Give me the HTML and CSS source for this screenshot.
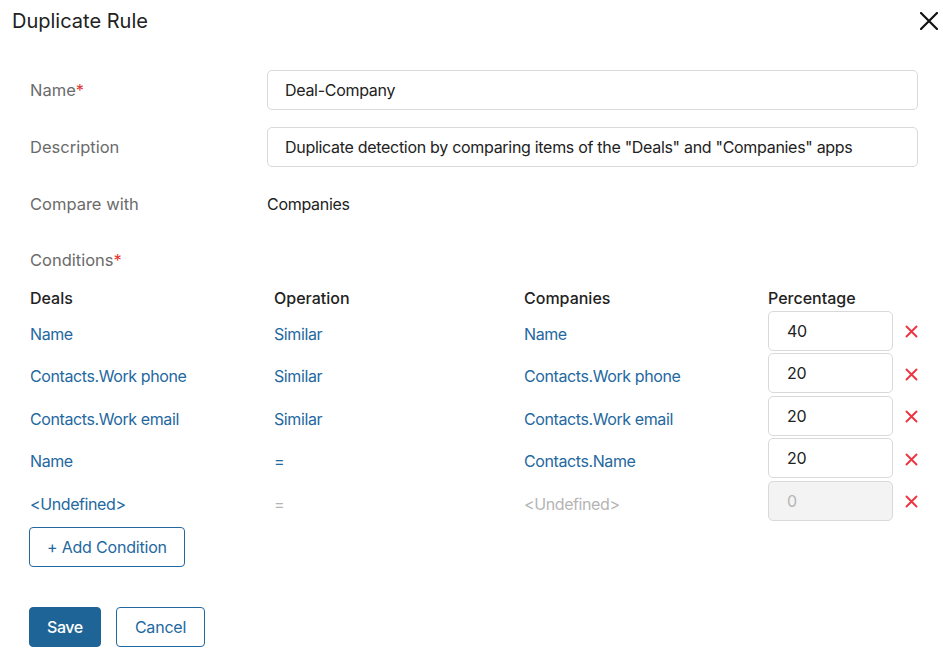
FILE: index.html
```html
<!DOCTYPE html>
<html>
<head>
<meta charset="utf-8">
<link rel="stylesheet" href="styles.css">
</head>
<body>
<div class="dialog">
  <div class="header">
    <h1 class="title">Duplicate Rule</h1>
    <button class="close" aria-label="Close">
      <svg width="18" height="18" viewBox="0 0 18 18"><path d="M1 1 L17 17 M17 1 L1 17" stroke="#111" stroke-width="2.2" stroke-linecap="round"/></svg>
    </button>
  </div>
  <div class="form">
    <div class="label">Name<span class="req">*</span></div>
    <div class="field"><div class="input">Deal-Company</div></div>
    <div class="label">Description</div>
    <div class="field"><div class="input">Duplicate detection by comparing items of the "Deals" and "Companies" apps</div></div>
    <div class="label">Compare with</div>
    <div class="field"><div class="value">Companies</div></div>
  </div>
  <div class="cond-label">Conditions<span class="req">*</span></div>
  <div class="table">
    <div class="th">Deals</div><div class="th">Operation</div><div class="th">Companies</div><div class="th">Percentage</div><div></div>

    <div class="td link">Name</div><div class="td link">Similar</div><div class="td link">Name</div><div class="pct"><div class="num">40</div></div><div class="del"><svg width="13" height="13" viewBox="0 0 13 13"><path d="M1.5 1.5 L11.5 11.5 M11.5 1.5 L1.5 11.5" stroke="#ef3340" stroke-width="1.9" stroke-linecap="round"/></svg></div>

    <div class="td link">Contacts.Work phone</div><div class="td link">Similar</div><div class="td link">Contacts.Work phone</div><div class="pct"><div class="num">20</div></div><div class="del"><svg width="13" height="13" viewBox="0 0 13 13"><path d="M1.5 1.5 L11.5 11.5 M11.5 1.5 L1.5 11.5" stroke="#ef3340" stroke-width="1.9" stroke-linecap="round"/></svg></div>

    <div class="td link">Contacts.Work email</div><div class="td link">Similar</div><div class="td link">Contacts.Work email</div><div class="pct"><div class="num">20</div></div><div class="del"><svg width="13" height="13" viewBox="0 0 13 13"><path d="M1.5 1.5 L11.5 11.5 M11.5 1.5 L1.5 11.5" stroke="#ef3340" stroke-width="1.9" stroke-linecap="round"/></svg></div>

    <div class="td link">Name</div><div class="td link">=</div><div class="td link">Contacts.Name</div><div class="pct"><div class="num">20</div></div><div class="del"><svg width="13" height="13" viewBox="0 0 13 13"><path d="M1.5 1.5 L11.5 11.5 M11.5 1.5 L1.5 11.5" stroke="#ef3340" stroke-width="1.9" stroke-linecap="round"/></svg></div>

    <div class="td link">&lt;Undefined&gt;</div><div class="td muted">=</div><div class="td muted">&lt;Undefined&gt;</div><div class="pct"><div class="num disabled">0</div></div><div class="del"><svg width="13" height="13" viewBox="0 0 13 13"><path d="M1.5 1.5 L11.5 11.5 M11.5 1.5 L1.5 11.5" stroke="#ef3340" stroke-width="1.9" stroke-linecap="round"/></svg></div>
  </div>
  <button class="btn-outline add">+ Add Condition</button>
  <div class="actions">
    <button class="btn-primary">Save</button>
    <button class="btn-outline">Cancel</button>
  </div>
</div>
</body>
</html>
```
FILE: styles.css
```css
* { box-sizing: border-box; }
html, body { margin: 0; padding: 0; background: #fff; }
body {
  font-family: Inter, "Noto Sans", "Liberation Sans", sans-serif;
  font-size: 16px;
  color: #222;
  letter-spacing: -0.3px;
}
.dialog { width: 943px; height: 655px; position: relative; }
.header {
  display: flex;
  justify-content: space-between;
  align-items: center;
  height: 42px;
  padding: 0 5px 0 12px;
}
.title { margin: 0; font-size: 20px; font-weight: 400; color: #222; letter-spacing: 0; }
.close { background: none; border: 0; padding: 0; width: 18px; height: 18px; display: flex; align-items: center; justify-content: center; margin-top: -1px; }
.form {
  display: grid;
  grid-template-columns: 237px 651px;
  grid-auto-rows: 40px;
  row-gap: 17px;
  margin-top: 28px;
  padding-left: 30px;
}
.label { display: flex; align-items: center; color: #6b6b6b; font-size: 16.5px; letter-spacing: 0; }
.req { color: #e53935; }
.field { display: flex; align-items: center; }
.input {
  width: 100%;
  height: 40px;
  border: 1px solid #d9d9d9;
  border-radius: 5px;
  display: flex;
  align-items: center;
  padding: 0 17px;
  color: #222;
}
.value { color: #222; }
.cond-label {
  color: #6b6b6b;
  font-size: 16.5px;
  letter-spacing: 0;
  padding-left: 30px;
  margin-top: 16px;
  height: 40px;
  display: flex;
  align-items: center;
}
.table {
  display: grid;
  grid-template-columns: 244px 250px 244px 125px 25px;
  grid-template-rows: 28px;
  grid-auto-rows: 40px;
  row-gap: 2.5px;
  padding-left: 30px;
}
.th { font-weight: 500; color: #222; display: flex; align-items: flex-start; padding-top: 8px; letter-spacing: 0; }
.td { display: flex; align-items: center; padding-top: 6px; letter-spacing: -0.4px; }
.link { color: #2468a0; }
.muted { color: #b5b5b5; }
.pct { display: flex; }
.num {
  width: 125px;
  height: 40px;
  border: 1px solid #d9d9d9;
  border-radius: 5px;
  display: flex;
  align-items: center;
  padding: 0 18px;
  color: #222;
}
.num.disabled { background: #f3f3f3; color: #b5b5b5; }
.del {
  display: flex;
  align-items: center;
  justify-content: flex-end;
  padding-top: 2px;
}
button { font-family: inherit; font-size: 16px; cursor: pointer; letter-spacing: -0.2px; }
.btn-outline {
  background: #fff;
  border: 1px solid #2468a0;
  color: #2468a0;
  border-radius: 4px;
  height: 40px;
  padding: 0 17px;
}
.add { margin-left: 29px; margin-top: 6px; }
.actions { display: flex; gap: 15px; margin-left: 29px; margin-top: 40px; }
.btn-primary {
  background: #1f6496;
  border: 1px solid #1f6496;
  color: #fff;
  border-radius: 4px;
  height: 40px;
  padding: 0 17px;
  font-weight: 500;
  letter-spacing: -0.4px;
}
.actions .btn-outline { padding: 0 18px; }
```
